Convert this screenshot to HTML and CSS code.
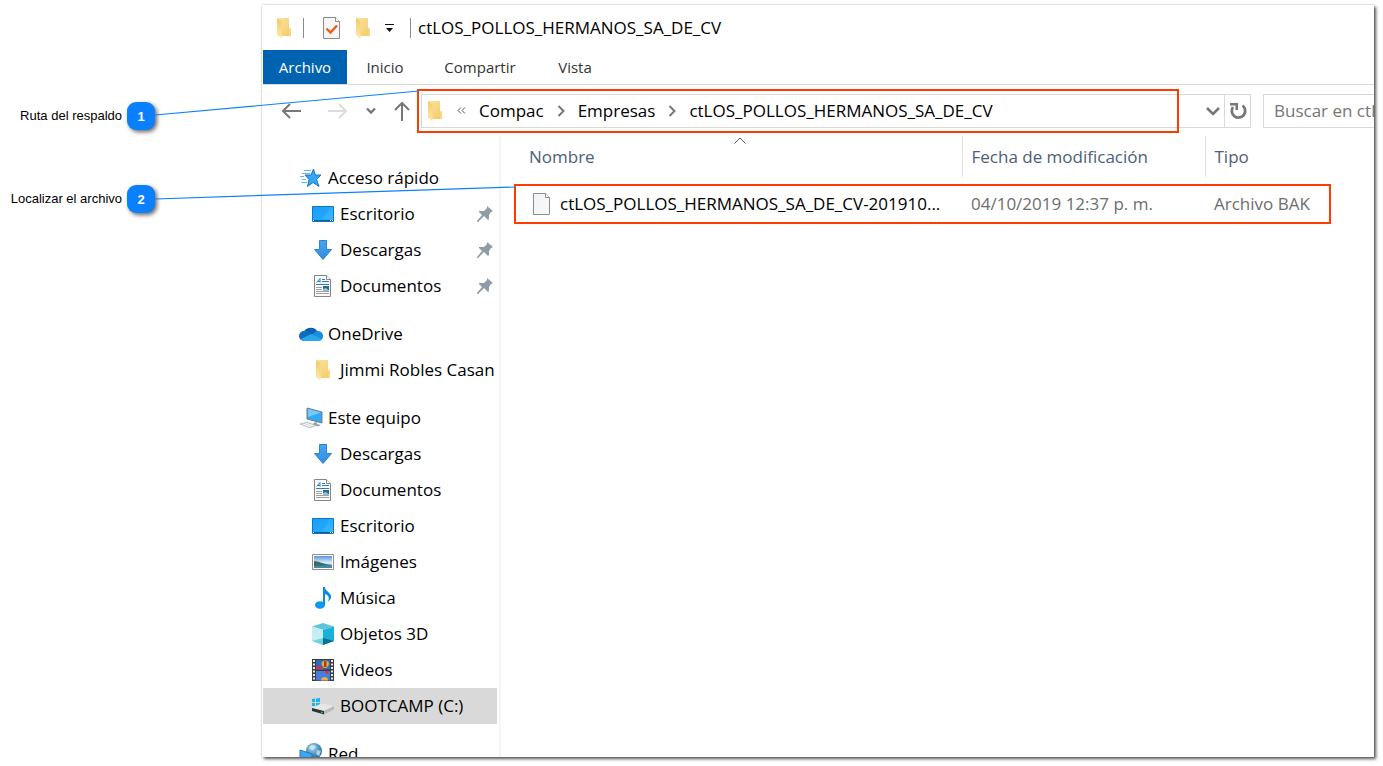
FILE: index.html
```html
<!DOCTYPE html>
<html lang="es">
<head>
<meta charset="utf-8">
<title>ctLOS_POLLOS_HERMANOS_SA_DE_CV</title>
<link rel="stylesheet" href="styles.css">
</head>
<body>
<svg class="sprite" aria-hidden="true">
  <defs>
    <linearGradient id="g-folder" x1="0" y1="0" x2="1" y2="1"><stop offset="0" stop-color="#fbe3a0"/><stop offset="1" stop-color="#f3cb66"/></linearGradient>
    <linearGradient id="g-flap" x1="0" y1="0" x2="0" y2="1"><stop offset="0" stop-color="#f2cb67"/><stop offset="1" stop-color="#ffe9a8"/></linearGradient>
    <linearGradient id="g-blue" x1="0" y1="0" x2="1" y2="1"><stop offset="0" stop-color="#1a9cf5"/><stop offset=".6" stop-color="#22a7ff"/><stop offset="1" stop-color="#3fb3ff"/></linearGradient>
    <linearGradient id="g-down" x1="0" y1="0" x2="0" y2="1"><stop offset="0" stop-color="#4aa5ee"/><stop offset="1" stop-color="#2f8de2"/></linearGradient>
    <linearGradient id="g-sky" x1="0" y1="0" x2="0" y2="1"><stop offset="0" stop-color="#5b94e0"/><stop offset=".55" stop-color="#d6ebf8"/><stop offset="1" stop-color="#7fb0c8"/></linearGradient>
    <linearGradient id="g-page" x1="0" y1="0" x2="1" y2="1"><stop offset="0" stop-color="#f1f3f6"/><stop offset="1" stop-color="#fafafa"/></linearGradient>
    <radialGradient id="g-globe" cx=".4" cy=".3" r=".8"><stop offset="0" stop-color="#b8dcf2"/><stop offset=".5" stop-color="#4d93c6"/><stop offset="1" stop-color="#1e5f95"/></radialGradient>
    <symbol id="folder" viewBox="0 0 16 22"><path d="M1 1h12v10.500h2V19H5z" fill="url(#g-folder)"/><path d="M13 11.500h2V19h-2z" fill="#f7d680"/><path d="M1 1l4.500 3.500v17L1 18z" fill="url(#g-flap)"/></symbol>
    <symbol id="check" viewBox="0 0 18 22"><path d="M.5.5h12l4 4v17H.5z" fill="#f4f6f8" stroke="#8a8a8a"/><path d="M12.500.5v4h4" fill="#fff" stroke="#8a8a8a"/><path d="M3.500 11.500l4 4 6.500-7" fill="none" stroke="#f05a12" stroke-width="2.400"/></symbol>
    <symbol id="file" viewBox="0 0 18 22"><path d="M.5.5h12l4 4v17H.5z" fill="url(#g-page)" stroke="#8c8c8c"/><path d="M12.500.5v4h4" fill="#fff" stroke="#8c8c8c"/></symbol>
    <symbol id="star" viewBox="0 0 22 20"><path d="M13.500 1l1.800 6H21l-4.500 4.500 2.500 7-6-4-5.500 4 1.500-7-4-4.500h6z" fill="#35a7f2" stroke="#1579c6"/><path d="M4 2.500h7M2 5.500h8M0 8.500h4M2 11.500h4M1 14.500h6" stroke="#63b8ee"/></symbol>
    <symbol id="desktop" viewBox="0 0 22 16"><path d="M.5.5h21v15H.5z" fill="url(#g-blue)" stroke="#0a78c2"/><path d="M10 13L19 1h2v12z" fill="#46b6ff" opacity=".45"/><path d="M1 14.500h20" stroke="#075a9c"/><path d="M1 14.500h1M18 14.500h1M20 14.500h1" stroke="#fff"/></symbol>
    <symbol id="down" viewBox="0 0 20 20"><path d="M6.500.5h7v9h5L10 19.500 1.500 9.500h5z" fill="url(#g-down)" stroke="#2c84d4"/></symbol>
    <symbol id="doc" viewBox="0 0 18 22"><path d="M.5.5h12l4 4v17H.5z" fill="#fbfbfb" stroke="#858585"/><path d="M12.500.5v4h4" fill="#fff" stroke="#858585"/><path d="M8 4.500h3M8 6.500h7M2 9.500h13" stroke="#2b7fc4"/><path d="M2.500 7.500L6 3.500v4M4 6.500h2" fill="none" stroke="#1b87d2"/><path d="M2 12.500h6M2 14.500h6M2 16.500h13M2 18.500h13" stroke="#a0a0a0"/><path d="M9 11h6v4.500H9z" fill="#2f6793"/><path d="M9 14l3-1 3 2.500H9z" fill="#8fc5e6"/></symbol>
    <symbol id="cloud" viewBox="0 0 24 16"><path d="M5 6a7 6 0 0 1 13-1z" fill="#0a5ca8"/><path d="M5 15a5 5 0 0 1 0-10c3-1 6 0 9 3l4 7z" fill="#0f6cbf"/><path d="M8 4a7 6 0 0 1 11 2l1 5H10z" fill="#0b64b5"/><path d="M12 9l6-4a5 5 0 0 1 2 10H9z" fill="#1490df"/><path d="M2 13l10-5 11 5a4 3 0 0 1-3 2H5a4 3 0 0 1-3-2z" fill="#28a8ea"/></symbol>
    <symbol id="pc" viewBox="0 0 24 22"><path d="M8 1l15 4v11L8 12z" fill="#35a9ef" stroke="#6f7d88"/><path d="M9 2l13 3.500L9 10z" fill="#76caf9"/><path d="M16 15l2 .5v1.500l4 1-3 1.500-6-2z" fill="#9ba4aa"/><path d="M1 17l7-2 9 3.500-6 2.500z" fill="#c9cfd3" stroke="#a2abb0" stroke-width=".6"/><path d="M4 17l8 3M6.500 16l8 3" stroke="#fff"/></symbol>
    <symbol id="picture" viewBox="0 0 22 16"><path d="M.5.5h21v15H.5z" fill="#fff" stroke="#8f8f8f"/><path d="M2 2h18v12H2z" fill="url(#g-sky)"/><path d="M2 7c5 0 8 3 18 4v1H2z" fill="#396f60"/><path d="M2 12l18-1v3H2z" fill="#4b86a6"/></symbol>
    <symbol id="music" viewBox="0 0 18 22"><ellipse cx="6" cy="18" rx="5" ry="3.800" fill="#0c9bee"/><path d="M9 0h2c0 5 7 5 6 11-1 2-2 3-3 4 2-5 0-7-3-8v11H9z" fill="#0a8de0"/></symbol>
    <symbol id="cube" viewBox="0 0 22 22"><path d="M11 0l11 3.500-11 3.500L0 3.500z" fill="#5cc7d8"/><path d="M0 3.500L11 7v15L0 18z" fill="#c4eef2"/><path d="M22 3.500L11 7v15l11-4z" fill="#19b1d8"/><path d="M0 18l11-3v7z" fill="#6fd2dc"/><path d="M11 15l11 3-11 4z" fill="#087092"/></symbol>
    <symbol id="video" viewBox="0 0 22 22"><path d="M0 0h22v22H0z" fill="#3a3a3a"/><path d="M4 1h14v9.500H4z" fill="#3468c4"/><path d="M4 12h14v9.500H4z" fill="#477de0"/><path d="M2 1v21M20 1v21" stroke="#eee" stroke-width="2" stroke-dasharray="2 1.500"/><path d="M4 9c2-3 5-2 7 0v1.500H4z" fill="#c63a4c"/><path d="M9.500 4.500a3.800 3.500 0 0 1 7.500 0c0 2-1.500 3-2.500 4.500h-2.500c-1-1.500-2.500-2.500-2.500-4.500z" fill="#e0b51d"/><path d="M12 2h2.500v6H12z" fill="#b5352a"/><path d="M13 12h4l-1 3h-2z" fill="#d43c2c"/><path d="M9 21.500a3.500 3.500 0 0 1 7 0z" fill="#f0ae36"/></symbol>
    <symbol id="drive" viewBox="0 0 24 18"><path d="M1 2l3-.4v3.400H1zM5 1.400L9 1v4H5zM1 6h3v3H1zM5 6h4v3.500L5 9z" fill="#16b5ed"/><path d="M1 11l9-4.500L23 9l-10 5z" fill="#e7e7e7"/><path d="M13 14l10-5v3.500L13 17.500z" fill="#bababa"/><path d="M1 11l12 3v3.500L1 14z" fill="#303435"/><path d="M10 15.500h1.500" stroke="#2ee45a" stroke-width="1.500"/></symbol>
    <symbol id="net" viewBox="0 0 24 22"><circle cx="15" cy="8" r="8" fill="url(#g-globe)"/><path d="M11 3c3-2 5-1 6 1l-3 3-4-1zM18 7l4 1-2 5-3-2z" fill="#d3edf5" opacity=".75"/><path d="M1 7l12 4v11L1 17z" fill="#35a9f1" stroke="#257bb9"/></symbol>
    <symbol id="pin" viewBox="0 0 16 16"><path d="M10 0l6 5-2 1-2 3v4l-1 1-4-4-6 6H0v-1l5-6-3-3V5h5l3-3z" fill="#8f9ba5"/></symbol>
  </defs>
</svg>

<div class="page">
  <ol class="notes">
    <li class="note"><span>Ruta del respaldo</span><b class="badge">1</b></li>
    <li class="note"><span>Localizar el archivo</span><b class="badge">2</b></li>
  </ol>

  <main class="window">
    <header class="titlebar">
      <svg class="i-folder"><use href="#folder"/></svg>
      <span class="rule rule-first"></span>
      <button class="quick" aria-label="Propiedades"><svg class="i-page"><use href="#check"/></svg></button>
      <button class="quick" aria-label="Nueva carpeta"><svg class="i-folder"><use href="#folder"/></svg></button>
      <button class="quick" aria-label="Personalizar"><svg class="i-more" viewBox="0 0 9 8"><path d="M0 .5h9" stroke="#111"/><path d="M1 4h7L4.500 8z" fill="#111"/></svg></button>
      <span class="rule"></span>
      <h1 class="title">ctLOS_POLLOS_HERMANOS_SA_DE_CV</h1>
    </header>

    <nav class="tabs">
      <button class="tab tab-active">Archivo</button>
      <button class="tab">Inicio</button>
      <button class="tab tab-wide">Compartir</button>
      <button class="tab">Vista</button>
    </nav>

    <div class="navbar">
      <div class="history">
        <button class="back" aria-label="Atrás"><svg class="i-arrow" viewBox="0 0 20 16"><path d="M20 8H2M9 1L2 8l7 7" fill="none" stroke="#777" stroke-width="2"/></svg></button>
        <button aria-label="Adelante"><svg class="i-arrow" viewBox="0 0 20 16"><path d="M0 8h18M11 1l7 7-7 7" fill="none" stroke="#dcdcdc" stroke-width="2"/></svg></button>
        <button aria-label="Recientes"><svg class="i-chev" viewBox="0 0 10 8"><path d="M1 1.500l4 4 4-4" fill="none" stroke="#777" stroke-width="2.400"/></svg></button>
        <button aria-label="Subir"><svg class="i-up" viewBox="0 0 16 20"><path d="M8 20V2M1 9l7-7 7 7" fill="none" stroke="#777" stroke-width="2"/></svg></button>
      </div>
      <div class="address">
        <svg class="i-folder"><use href="#folder"/></svg>
        <svg class="i-back" viewBox="0 0 9 7"><path d="M4 .5l-3 3 3 3M8 .5l-3 3 3 3" fill="none" stroke="#555"/></svg>
        <button class="crumb">Compac</button>
        <svg class="i-sep" viewBox="0 0 8 12"><path d="M1.500 1l5 5-5 5" fill="none" stroke="#777" stroke-width="2"/></svg>
        <button class="crumb">Empresas</button>
        <svg class="i-sep" viewBox="0 0 8 12"><path d="M1.500 1l5 5-5 5" fill="none" stroke="#777" stroke-width="2"/></svg>
        <button class="crumb">ctLOS_POLLOS_HERMANOS_SA_DE_CV</button>
        <button class="drop" aria-label="Ubicaciones anteriores"><svg class="i-drop" viewBox="0 0 14 10"><path d="M1 2l6 6 6-6" fill="none" stroke="#777" stroke-width="2.600"/></svg></button>
      </div>
      <button class="refresh" aria-label="Actualizar"><svg class="i-refresh" viewBox="0 0 18 18"><path d="M13.500 3.500A6.700 6.700 0 1 1 4 5" fill="none" stroke="#777" stroke-width="2.800"/><path d="M1 1h8v7H6.500V3.500H1z" fill="#777"/></svg></button>
      <input class="search" type="text" aria-label="Buscar" placeholder="Buscar en ctLOS_POLLOS">
    </div>

    <div class="content">
      <nav class="tree">
        <ul>
          <li class="root"><svg class="i-star"><use href="#star"/></svg><a href="#">Acceso rápido</a></li>
          <li><svg class="i-wide"><use href="#desktop"/></svg><a href="#">Escritorio</a><svg class="i-pin"><use href="#pin"/></svg></li>
          <li><svg class="i-down"><use href="#down"/></svg><a href="#">Descargas</a><svg class="i-pin"><use href="#pin"/></svg></li>
          <li><svg class="i-page"><use href="#doc"/></svg><a href="#">Documentos</a><svg class="i-pin"><use href="#pin"/></svg></li>
        </ul>
        <ul>
          <li class="root"><svg class="i-cloud"><use href="#cloud"/></svg><a href="#">OneDrive</a></li>
          <li><svg class="i-folder"><use href="#folder"/></svg><a href="#">Jimmi Robles Casan</a></li>
        </ul>
        <ul>
          <li class="root"><svg class="i-pc"><use href="#pc"/></svg><a href="#">Este equipo</a></li>
          <li><svg class="i-down"><use href="#down"/></svg><a href="#">Descargas</a></li>
          <li><svg class="i-page"><use href="#doc"/></svg><a href="#">Documentos</a></li>
          <li><svg class="i-wide"><use href="#desktop"/></svg><a href="#">Escritorio</a></li>
          <li><svg class="i-wide"><use href="#picture"/></svg><a href="#">Imágenes</a></li>
          <li><svg class="i-page"><use href="#music"/></svg><a href="#">Música</a></li>
          <li><svg class="i-square"><use href="#cube"/></svg><a href="#">Objetos 3D</a></li>
          <li><svg class="i-square"><use href="#video"/></svg><a href="#">Videos</a></li>
          <li class="selected"><svg class="i-drive"><use href="#drive"/></svg><a href="#">BOOTCAMP (C:)</a></li>
        </ul>
        <ul>
          <li class="root"><svg class="i-pc"><use href="#net"/></svg><a href="#">Red</a></li>
        </ul>
      </nav>

      <section class="files">
        <table>
          <thead>
            <tr>
              <th class="col-name">Nombre<svg class="i-sort" viewBox="0 0 12 7"><path d="M.5 6.500l5.500-5.500 5.500 5.500" fill="none" stroke="#555"/></svg></th>
              <th class="col-date">Fecha de modificación</th>
              <th class="col-type">Tipo</th>
            </tr>
          </thead>
          <tbody>
            <tr class="gap"><td colspan="3"></td></tr>
            <tr class="marked">
              <td><div class="file"><svg class="i-page"><use href="#file"/></svg><span>ctLOS_POLLOS_HERMANOS_SA_DE_CV-201910...</span></div></td>
              <td class="meta">04/10/2019 12:37 p. m.</td>
              <td class="meta">Archivo BAK</td>
            </tr>
          </tbody>
        </table>
      </section>
    </div>
  </main>

  <svg class="leaders" width="520" height="220" aria-hidden="true"><path d="M155 115L419 91M155 199L516 187" fill="none" stroke="#0a80ff" stroke-width="1.200"/></svg>
</div>
</body>
</html>
```
FILE: styles.css
```css
* { box-sizing: border-box; }
body { margin: 0; background: #fff; color: #000; font: 17px/24px "Open Sans", "Noto Sans", sans-serif; }
button { padding: 0; border: 0; background: none; color: inherit; font: inherit; display: flex; align-items: center; }
svg { display: block; flex: none; }
ul, ol { margin: 0; padding: 0; list-style: none; }
a { color: inherit; text-decoration: none; white-space: nowrap; }
.sprite { position: absolute; width: 0; height: 0; }

.page { position: relative; display: flex; height: 100vh; padding: 5px 9px 9px 0; overflow: hidden; }
.notes { flex: none; width: 262px; padding-top: 97px; display: flex; flex-direction: column; gap: 55px; }
.note { display: flex; justify-content: flex-end; align-items: center; gap: 5px; width: 155px; height: 28px; font: 13px/16px "Liberation Sans", Arial, sans-serif; white-space: nowrap; }
.badge { width: 28px; height: 28px; border-radius: 9px; background: #0a80ff; color: #fff; line-height: 30px; text-align: center; box-shadow: 2px 2px 4px rgba(0, 0, 0, .6); }
.leaders { position: absolute; left: 0; top: 0; pointer-events: none; }

.window { flex: 1; min-width: 0; display: flex; flex-direction: column; padding-left: 1px; overflow: hidden; background: #fff; box-shadow: 2px 2px 3px rgba(0, 0, 0, .65), 0 0 2px rgba(0, 0, 0, .25); }

.titlebar { flex: none; display: flex; align-items: center; height: 46px; margin-bottom: -1px; padding-left: 13px; }
.rule { width: 1px; height: 20px; background: #8a8a8a; }
.rule-first { margin: 0 19px 0 11px; }
.quick { margin-right: 14px; }
.quick + .rule { margin-left: 2px; }
.title { margin: 0 0 0 7px; font-size: 17px; font-weight: 400; }

.tabs { flex: none; display: flex; height: 35px; border-bottom: 1px solid #dadbdc; font-size: 15px; color: #333; }
.tab { justify-content: center; width: 76px; }
.tab-wide { width: 114px; }
.tab-active { width: 84px; background: #0063b1; color: #fff; }

.navbar { flex: none; display: flex; align-items: center; height: 51px; }
.history { flex: none; display: flex; align-items: center; gap: 18px; width: 158px; padding-left: 18px; }
.back { margin-right: 9px; }
.address { position: relative; flex: 1; min-width: 0; display: flex; align-items: center; height: 34px; padding-left: 5px; border: 1px solid #d9d9d9; }
.address::after { content: ""; position: absolute; inset: -6px 45px -6px -5px; border: 2px solid #ff3c00; pointer-events: none; }
.i-back { width: 9px; height: 7px; margin: 0 13px 0 14px; }
.i-sep { width: 8px; height: 12px; margin: 0 13px; }
.drop { margin: 0 4px 0 auto; }
.refresh { flex: none; justify-content: center; width: 26px; height: 34px; border: 1px solid #d9d9d9; border-left: 0; }
.search { flex: none; width: 111px; height: 34px; margin-left: 12px; padding: 0 0 0 10px; border: 1px solid #d9d9d9; border-right: 0; font: inherit; color: #6d6d6d; }
.search::placeholder { color: #767676; }

.content { flex: 1; min-height: 0; display: flex; overflow: hidden; }
.tree { flex: none; width: 238px; padding-top: 24px; border-right: 2px solid #f5f5f5; overflow: hidden; }
.tree ul { margin-bottom: 12px; }
.tree li { display: grid; grid-template-columns: 24px 1fr 16px; align-items: center; justify-items: start; column-gap: 5px; height: 36px; width: 234px; padding: 0 4px 0 48px; }
.tree .root { padding-left: 36px; }
.tree li > svg:first-child { justify-self: center; }
.tree .selected { background: #d9d9d9; }

.files { flex: 1; min-width: 0; padding-left: 14px; }
table { border-collapse: collapse; table-layout: fixed; width: 815px; }
th { position: relative; height: 41px; padding: 0 9px; text-align: left; font-weight: 400; color: #4c607a; border-right: 1px solid #e2e2e2; }
.col-name { width: 447px; padding-left: 14px; }
.col-date { width: 243px; }
.col-type { border-right: 0; }
.i-sort { position: absolute; top: 1px; left: 219px; width: 12px; height: 7px; }
.gap td { height: 8px; padding: 0; }
td { height: 38px; padding: 0 9px; white-space: nowrap; }
.marked { outline: 2px solid #ff3c00; outline-offset: -1px; }
.file { display: flex; align-items: center; gap: 9px; padding-left: 9px; }
.meta { color: #6d6d6d; }

.i-folder { width: 16px; height: 22px; }
.i-page { width: 18px; height: 22px; }
.i-more { width: 9px; height: 8px; }
.i-arrow { width: 20px; height: 16px; }
.i-chev { width: 10px; height: 8px; }
.i-up { width: 16px; height: 20px; }
.i-drop { width: 14px; height: 10px; }
.i-refresh { width: 18px; height: 18px; }
.i-star { width: 22px; height: 20px; }
.i-wide { width: 22px; height: 16px; }
.i-down { width: 20px; height: 20px; }
.i-cloud { width: 24px; height: 16px; }
.i-pc { width: 24px; height: 22px; }
.i-square { width: 22px; height: 22px; }
.i-drive { width: 24px; height: 18px; }
.i-pin { width: 16px; height: 16px; }
```
